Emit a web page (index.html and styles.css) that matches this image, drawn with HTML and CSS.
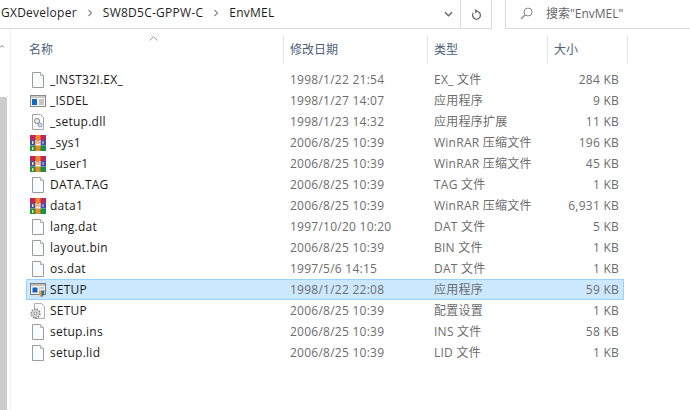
FILE: index.html
```html
<!DOCTYPE html>
<html lang="zh-CN">
<head>
<meta charset="utf-8">
<title>EnvMEL</title>
<link rel="stylesheet" href="styles.css">
</head>
<body>
<svg class="defs" width="0" height="0" aria-hidden="true">
  <symbol id="i-file" viewBox="0 0 16 16">
    <path d="M2.500 .5H10.500L13.500 3.500V15.500H2.500Z" fill="#fbfcfd" stroke="#9c9c9c"/>
    <path d="M10.500 .5V3.500H13.500" fill="#f0f0f0" stroke="#b0b0b0"/>
  </symbol>
  <symbol id="i-app" viewBox="0 0 16 16">
    <rect x=".5" y="2.500" width="15" height="11" fill="#f4f4f4" stroke="#8a8a8a"/>
    <rect x="1" y="3" width="14" height="2" fill="#c9c9c9"/>
    <rect x="2" y="6" width="5" height="6" fill="#1467c4"/>
    <path d="M9 7h5M9 9h5M9 11h5" stroke="#9a9a9a"/>
  </symbol>
  <symbol id="i-setup" viewBox="0 0 16 16">
    <rect x=".5" y="1.500" width="15" height="11" fill="#f4f4f4" stroke="#7a7a7a"/>
    <rect x="1" y="2" width="14" height="2" fill="#c0c0c0"/>
    <rect x="2.500" y="5.500" width="5" height="5" fill="#1467c4"/>
    <path d="M9 6h5" stroke="#9a9a9a"/>
    <path d="M9 8.500h5.500l-.5 4-2.500 3-2.500-3Z" fill="#e8a21c"/>
    <path d="M11.500 8.500h3l-.5 4-2.500 3Z" fill="#2a6fc0"/>
  </symbol>
  <symbol id="i-dll" viewBox="0 0 16 16">
    <path d="M2.500 .5H10.500L13.500 3.500V15.500H2.500Z" fill="#fafafa" stroke="#a6a6a6"/>
    <circle cx="7" cy="7" r="2.600" fill="#e4e4e4" stroke="#8e8e8e"/>
    <circle cx="7" cy="7" r=".9" fill="#fff"/>
    <circle cx="10" cy="11" r="2" fill="#d4dde6" stroke="#8a9cb0"/>
  </symbol>
  <symbol id="i-rar" viewBox="0 0 16 16">
    <rect x="0" y="0" width="16" height="5" fill="#c3245c"/>
    <rect x="0" y="5" width="16" height="5.500" fill="#4a4bb0"/>
    <rect x="0" y="10.500" width="16" height="5.500" fill="#1f8f46"/>
    <rect x="5.500" y="0" width="5" height="16" fill="#ea8a28"/>
    <rect x="2" y="6" width="1.500" height="3" fill="#f2e27a"/>
    <rect x="2" y="12" width="1.500" height="3" fill="#f2e27a"/>
    <path d="M5.500 5V10.500H10.500V5H9.500V9H8.500V6H7.500V9H6.500V5Z" fill="#f6f1e4"/>
    <rect x="12" y="6" width="2" height="3" fill="#8f8fd8"/>
  </symbol>
  <symbol id="i-ini" viewBox="0 0 16 16">
    <path d="M4.500 .5H11.500L14.500 3.500V15.500H4.500Z" fill="#fafafa" stroke="#b0b0b0"/>
    <circle cx="5.500" cy="10.500" r="4.300" fill="#dcdcdc" stroke="#8a8a8a" stroke-width="1.600" stroke-dasharray="1.600 1"/>
    <circle cx="5.500" cy="10.500" r="1.500" fill="#fff" stroke="#8a8a8a"/>
  </symbol>
</svg>

<header class="toolbar">
  <nav class="address">
    <div class="crumbs">
      <span>GXDeveloper</span>
      <svg class="chev" viewBox="0 0 6 8"><path d="M1.500 1L4.500 4L1.500 7" fill="none" stroke="#8a8a8a" stroke-width="1.200"/></svg>
      <span>SW8D5C-GPPW-C</span>
      <svg class="chev" viewBox="0 0 6 8"><path d="M1.500 1L4.500 4L1.500 7" fill="none" stroke="#8a8a8a" stroke-width="1.200"/></svg>
      <span>EnvMEL</span>
    </div>
    <div class="drop">
      <svg class="drop-icon" viewBox="0 0 10 6"><path d="M1 1L5 5L9 1" fill="none" stroke="#666" stroke-width="1.500"/></svg>
    </div>
    <div class="refresh">
      <svg class="refresh-icon" viewBox="0 0 12 14"><path d="M6 3.500A4.300 4.300 0 1 1 2.500 5.300" fill="none" stroke="#6a6a6a" stroke-width="1.400"/><path d="M4.500 .8L7.500 3.500L4.500 6Z" fill="#6a6a6a"/></svg>
    </div>
  </nav>
  <div class="search">
    <svg class="search-icon" viewBox="0 0 13 13"><circle cx="8" cy="5" r="4" fill="none" stroke="#8a8a8a"/><path d="M5 8L1 12" stroke="#8a8a8a" stroke-width="1.200"/></svg>
    <span>搜索"EnvMEL"</span>
  </div>
</header>

<main class="main">
  <aside class="scrollbar">
    <svg class="scroll-up" viewBox="0 0 8 6"><path d="M0 5L4 1L8 5" fill="none" stroke="#555" stroke-width="1.500"/></svg>
    <div class="thumb"></div>
  </aside>
  <section class="list">
    <div class="head">
      <svg class="sort" viewBox="0 0 9 5"><path d="M.5 4.500L4.500 .8L8.500 4.500" fill="none" stroke="#9a9a9a"/></svg>
      <div class="hcell hname">名称</div>
      <div class="hcell">修改日期</div>
      <div class="hcell">类型</div>
      <div class="hcell hlast">大小</div>
    </div>
    <div class="rows">
      <div class="row"><svg class="ico"><use href="#i-file"/></svg><span class="name">_INST32I.EX_</span><span class="meta">1998/1/22 21:54</span><span class="meta">EX_ 文件</span><span class="size">284 KB</span></div>
      <div class="row"><svg class="ico"><use href="#i-app"/></svg><span class="name">_ISDEL</span><span class="meta">1998/1/27 14:07</span><span class="meta">应用程序</span><span class="size">9 KB</span></div>
      <div class="row"><svg class="ico"><use href="#i-dll"/></svg><span class="name">_setup.dll</span><span class="meta">1998/1/23 14:32</span><span class="meta">应用程序扩展</span><span class="size">11 KB</span></div>
      <div class="row"><svg class="ico"><use href="#i-rar"/></svg><span class="name">_sys1</span><span class="meta">2006/8/25 10:39</span><span class="meta">WinRAR 压缩文件</span><span class="size">196 KB</span></div>
      <div class="row"><svg class="ico"><use href="#i-rar"/></svg><span class="name">_user1</span><span class="meta">2006/8/25 10:39</span><span class="meta">WinRAR 压缩文件</span><span class="size">45 KB</span></div>
      <div class="row"><svg class="ico"><use href="#i-file"/></svg><span class="name">DATA.TAG</span><span class="meta">2006/8/25 10:39</span><span class="meta">TAG 文件</span><span class="size">1 KB</span></div>
      <div class="row"><svg class="ico"><use href="#i-rar"/></svg><span class="name">data1</span><span class="meta">2006/8/25 10:39</span><span class="meta">WinRAR 压缩文件</span><span class="size">6,931 KB</span></div>
      <div class="row"><svg class="ico"><use href="#i-file"/></svg><span class="name">lang.dat</span><span class="meta">1997/10/20 10:20</span><span class="meta">DAT 文件</span><span class="size">5 KB</span></div>
      <div class="row"><svg class="ico"><use href="#i-file"/></svg><span class="name">layout.bin</span><span class="meta">2006/8/25 10:39</span><span class="meta">BIN 文件</span><span class="size">1 KB</span></div>
      <div class="row"><svg class="ico"><use href="#i-file"/></svg><span class="name">os.dat</span><span class="meta">1997/5/6 14:15</span><span class="meta">DAT 文件</span><span class="size">1 KB</span></div>
      <div class="row selected"><svg class="ico"><use href="#i-setup"/></svg><span class="name">SETUP</span><span class="meta">1998/1/22 22:08</span><span class="meta">应用程序</span><span class="size">59 KB</span></div>
      <div class="row"><svg class="ico"><use href="#i-ini"/></svg><span class="name">SETUP</span><span class="meta">2006/8/25 10:39</span><span class="meta">配置设置</span><span class="size">1 KB</span></div>
      <div class="row"><svg class="ico"><use href="#i-file"/></svg><span class="name">setup.ins</span><span class="meta">2006/8/25 10:39</span><span class="meta">INS 文件</span><span class="size">58 KB</span></div>
      <div class="row"><svg class="ico"><use href="#i-file"/></svg><span class="name">setup.lid</span><span class="meta">2006/8/25 10:39</span><span class="meta">LID 文件</span><span class="size">1 KB</span></div>
    </div>
  </section>
</main>
</body>
</html>
```
FILE: styles.css
```css
html, body {
  margin: 0;
  padding: 0;
  width: 690px;
  height: 410px;
  overflow: hidden;
  background: #fff;
  font-family: "Open Sans", "Noto Sans CJK SC", sans-serif;
  font-size: 12px;
  color: #1e1e1e;
}
.defs { display: block; height: 0; }
.toolbar {
  display: flex;
  height: 29px;
  gap: 13px;
}
.address {
  display: flex;
  width: 492px;
  box-sizing: border-box;
  border-bottom: 1px solid #d9d9d9;
  border-right: 1px solid #d9d9d9;
}
.crumbs {
  flex: 1;
  display: flex;
  align-items: center;
  gap: 10px;
  padding: 0 0 3px 1px;
  letter-spacing: .25px;
}
.chev { width: 6px; height: 8px; }
.drop {
  width: 24px;
  display: flex;
  align-items: center;
  justify-content: center;
  border-right: 1px solid #d9d9d9;
}
.drop-icon { width: 9px; height: 6px; }
.refresh {
  width: 30px;
  display: flex;
  align-items: center;
  justify-content: center;
}
.refresh-icon { width: 11px; height: 13px; }
.search {
  flex: 1;
  display: flex;
  align-items: center;
  gap: 13px;
  padding-left: 14px;
  padding-bottom: 2px;
  border-left: 1px solid #d9d9d9;
  border-bottom: 1px solid #d9d9d9;
  color: #666;
}
.search-icon { width: 13px; height: 13px; }
.main { display: flex; height: 381px; }
.scrollbar {
  width: 11px;
  box-sizing: border-box;
  position: relative;
  border-right: 1px solid #f0f0f0;
  padding-top: 68px;
}
.scroll-up { position: absolute; left: 0; top: 15px; width: 4px; height: 5px; }
.thumb { width: 7px; height: 313px; background: #cdcdcd; }
.list { flex: 1; padding: 7px 0 0 0; margin-left: -1px; position: relative; }
.head {
  display: grid;
  grid-template-columns: 274px 144px 120px 80px;
  height: 27px;
}
.sort { position: absolute; left: 139px; top: 7px; width: 9px; height: 5px; }
.hcell {
  border-right: 1px solid #e5e5e5;
  padding: 0 0 0 6px;
  line-height: 27px;
  color: #4c607a;
  box-sizing: border-box;
}
.hname { padding-left: 19px; }
.rows { padding: 6px 0 0 16px; }
.row {
  display: grid;
  grid-template-columns: 24px 240px 144px 90px 100px;
  width: 598px;
  box-sizing: border-box;
  height: 21px;
  line-height: 20px;
  align-items: center;
  letter-spacing: .25px;
}
.row.selected {
  background: #cce8ff;
  outline: 1px solid #99d1ff;
  outline-offset: -1px;
}
.ico { width: 16px; height: 16px; margin-left: 4px; }
.name { color: #1a1a1a; }
.meta { color: #6d6d6d; white-space: nowrap; }
.size { color: #6d6d6d; text-align: right; white-space: nowrap; margin-left: -3px; padding-right: 5px; }
```
